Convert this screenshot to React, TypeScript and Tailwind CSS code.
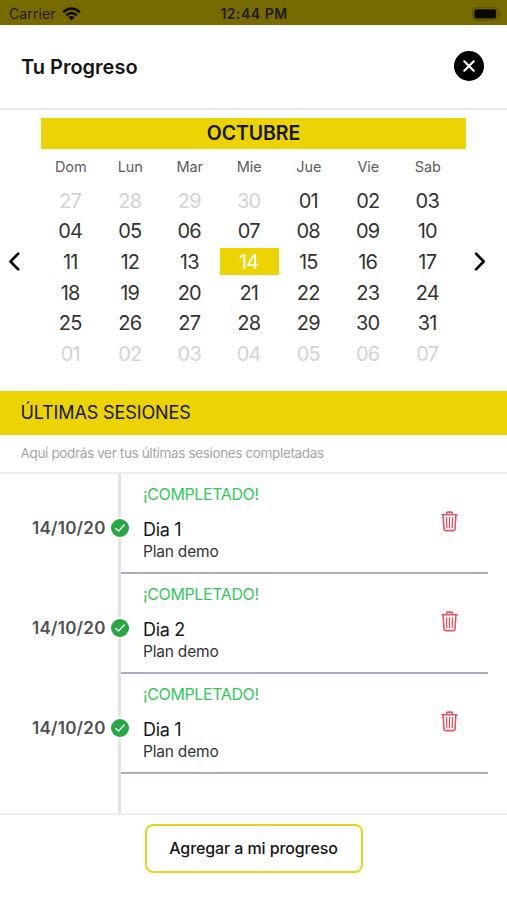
import React from 'react';
import clsx from 'clsx';

const WEEKDAYS = ['Dom', 'Lun', 'Mar', 'Mie', 'Jue', 'Vie', 'Sab'];

// Six weeks starting on September 27th
const DAYS = [
  ...[27, 28, 29, 30].map((day) => ({ day, current: false })),
  ...Array.from({ length: 31 }, (_, i) => ({ day: i + 1, current: true })),
  ...[1, 2, 3, 4, 5, 6, 7].map((day) => ({ day, current: false })),
];

const SELECTED_DAY = 14;

interface Session {
  id: number;
  date: string;
  title: string;
  plan: string;
}

const SESSIONS: Session[] = [
  { id: 1, date: '14/10/20', title: 'Dia 1', plan: 'Plan demo' },
  { id: 2, date: '14/10/20', title: 'Dia 2', plan: 'Plan demo' },
  { id: 3, date: '14/10/20', title: 'Dia 1', plan: 'Plan demo' },
];

export default function App() {
  return (
    <main className="flex h-[900px] w-[507px] flex-col overflow-hidden bg-white font-['Inter',sans-serif] text-[#151515]">
      <StatusBar />
      <Header />
      <Calendar />
      <h2 className="flex h-11 shrink-0 items-center bg-[#ebd304] pb-[2px] pl-[20.5px] text-[18px] tracking-[-0.12px]">ÚLTIMAS SESIONES</h2>
      <p className="flex h-[39px] shrink-0 items-center border-b-2 border-[#ececee] pl-[20.5px] text-[13.5px] tracking-[-0.35px] text-[#a5a5a5]">
        Aquí podrás ver tus últimas sesiones completadas
      </p>
      <section className="flex h-[339px] shrink-0 flex-col">
        {SESSIONS.map((session) => (
          <SessionRow key={session.id} session={session} />
        ))}
        <div className="ml-[118px] flex-1 border-l-[3px] border-[#e2e2e5]" />
      </section>
      <footer className="flex flex-1 items-start justify-center border-t-2 border-[#ececee] pt-[9px]">
        <button className="h-[49px] w-[218px] rounded-[8px] border-[2.5px] border-[#e8d31c] pb-[2px] text-[16px] font-medium tracking-[-0.1px]">
          Agregar a mi progreso
        </button>
      </footer>
    </main>
  );
}

function StatusBar() {
  return (
    <div className="grid h-[25px] shrink-0 grid-cols-3 items-center bg-[#776a00] pr-[6px] pl-[9px] pt-[2px] text-[13.5px] text-[#1d1a00]">
      <div className="flex items-center gap-[6px]">
        <span className="text-[14px] tracking-[0.1px]">Carrier</span>
        <WifiIcon />
      </div>
      <span className="pr-[2px] text-center text-[14px] font-semibold tracking-[0.5px] whitespace-nowrap">12:44 PM</span>
      <div className="flex justify-end">
        <BatteryIcon />
      </div>
    </div>
  );
}

function Header() {
  return (
    <header className="flex h-[85px] shrink-0 items-center justify-between border-b-2 border-[#ececee] pr-[23px] pl-[21px]">
      <h1 className="text-[20px] font-semibold">Tu Progreso</h1>
      <button aria-label="Cerrar" className="mb-px flex size-[30px] items-center justify-center rounded-full bg-black">
        <svg width="12" height="12" viewBox="0 0 12 12" stroke="#fff" strokeWidth="2.1" strokeLinecap="round">
          <path d="M1.3 1.3 10.7 10.7M10.7 1.3 1.3 10.7" />
        </svg>
      </button>
    </header>
  );
}

function Calendar() {
  return (
    <section className="flex h-[281px] shrink-0 pt-2">
      <button aria-label="Mes anterior" className="flex h-[286px] w-[41px] items-center pl-[8px]">
        <Chevron d="M10.2 1.6 2.5 9.5 10.2 17.4" />
      </button>
      <div className="w-[425px]">
        <div className="flex h-[31px] items-center justify-center bg-[#ebd304] text-[19.5px] font-semibold tracking-[-0.1px]">OCTUBRE</div>
        <div className="grid w-[416.5px] grid-cols-7 pt-[8px] text-center text-[14.5px] leading-5 tracking-[-0.1px] text-[#5c5c5c]">
          {WEEKDAYS.map((name) => (
            <span key={name}>{name}</span>
          ))}
        </div>
        <div className="grid w-[416.5px] auto-rows-[30.6px] grid-cols-7 items-center pt-[8px] text-center text-[20px] leading-[26px] tracking-[-0.8px]">
          {DAYS.map(({ day, current }, i) => (
            <span
              key={i}
              className={clsx(
                'pt-px pr-px',
                !current && 'text-[#d3d3d3]',
                current && day === SELECTED_DAY && 'bg-[#ebd304] text-white',
                current && day !== SELECTED_DAY && 'text-[#333]',
              )}
            >
              {String(day).padStart(2, '0')}
            </span>
          ))}
        </div>
      </div>
      <button aria-label="Mes siguiente" className="flex h-[286px] w-[41px] items-center pl-[8px]">
        <Chevron d="M2 1.6 9.7 9.5 2 17.4" />
      </button>
    </section>
  );
}

function SessionRow({ session }: { session: Session }) {
  return (
    <article className="flex h-[100px] shrink-0">
      <div className="flex w-[118px] items-center pt-[9px] pl-[32px] text-[17px] font-semibold tracking-[0.25px] text-[#505050]">{session.date}</div>
      <div className="relative flex flex-1 border-l-[3px] border-[#e2e2e5]">
        <div className="absolute top-[43px] -left-[12.5px] rounded-full bg-white p-[2px]">
          <CheckIcon />
        </div>
        <div className="mr-[19px] flex flex-1 justify-between border-b-2 border-[#abadc0] pr-[30px] pl-[22px]">
          <div>
            <p className="pt-[10px] text-[16px] leading-5 tracking-[-0.38px] text-[#34c759]">¡COMPLETADO!</p>
            <h3 className="pt-[14px] text-[18px] leading-6 tracking-[-0.3px]">{session.title}</h3>
            <p className="text-[15.5px] leading-5 tracking-[-0.2px] text-[#333]">{session.plan}</p>
          </div>
          <button aria-label="Eliminar" className="mt-[37px] h-[21px]">
            <TrashIcon />
          </button>
        </div>
      </div>
    </article>
  );
}

function Chevron({ d }: { d: string }) {
  return (
    <svg width="12" height="19" viewBox="0 0 12 19" fill="none" stroke="#000" strokeWidth="2.6" strokeLinecap="round" strokeLinejoin="round">
      <path d={d} />
    </svg>
  );
}

function CheckIcon() {
  return (
    <svg width="18" height="18" viewBox="0 0 18 18" fill="none">
      <circle cx="9" cy="9" r="9" fill="#28a745" />
      <path d="M4.8 9.5 7.5 12.1 13.2 6.1" stroke="#fff" strokeWidth="1.4" strokeLinecap="round" strokeLinejoin="round" />
    </svg>
  );
}

function TrashIcon() {
  return (
    <svg width="17" height="21" viewBox="0 0 17 21" fill="none" stroke="#df5664" strokeWidth="1.6" strokeLinecap="round" strokeLinejoin="round">
      <path d="M1 3.8H16M5.6 3.5V2.1Q5.6 1.1 6.6 1.1H10.4Q11.4 1.1 11.4 2.1V3.5" />
      <path d="M2.1 4 3 18.2Q3.1 19.6 4.5 19.6H12.5Q13.9 19.6 14 18.2L14.9 4" />
      <path d="M5.5 6.6 5.8 16.8M8.5 6.6V16.8M11.5 6.6 11.2 16.8" strokeWidth="1.3" />
    </svg>
  );
}

function WifiIcon() {
  return (
    <svg width="19" height="14" viewBox="0 0 19 14" fill="none" stroke="#0d0b00" strokeWidth="2.5">
      <path d="M1.2 5.2Q9.5-2.3 17.8 5.2M4.2 8.3Q9.5 3.6 14.8 8.3" />
      <path d="M9.5 13.6 6.3 10.3Q9.5 7.5 12.7 10.3Z" fill="#0d0b00" stroke="none" />
    </svg>
  );
}

function BatteryIcon() {
  return (
    <svg width="29" height="14" viewBox="0 0 29 14" fill="none">
      <rect x="0.7" y="0.7" width="25" height="12.4" rx="3.6" stroke="#5c5200" strokeWidth="1.1" />
      <rect x="2.3" y="2.3" width="21.8" height="9.2" rx="2" fill="#0a0900" />
      <path d="M27 4.8Q28.6 5.4 28.6 6.9T27 9Z" fill="#5c5200" />
    </svg>
  );
}
